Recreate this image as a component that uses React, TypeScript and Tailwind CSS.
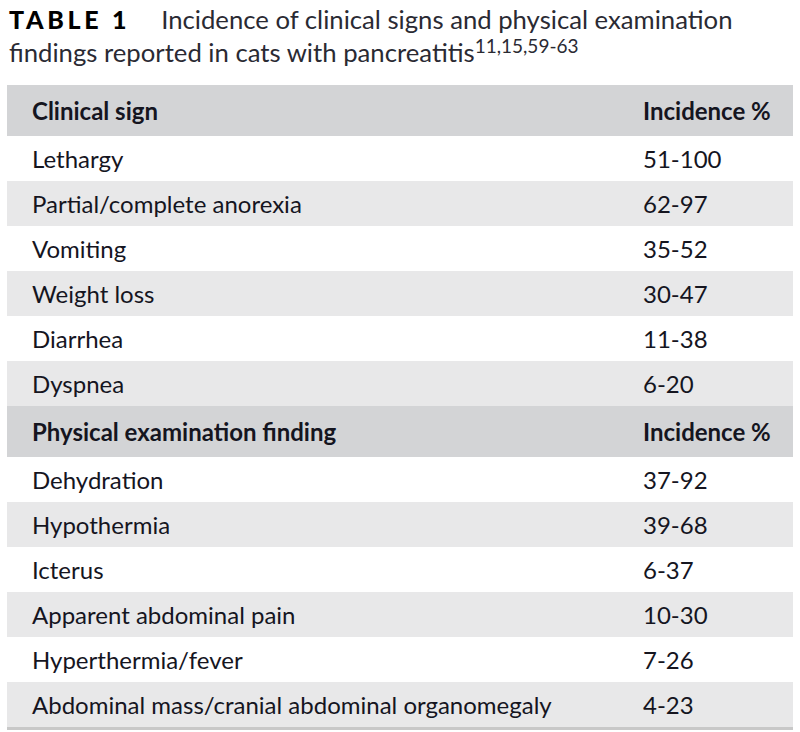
import React from "react";

const signs: [string, string][] = [
  ["Lethargy", "51-100"],
  ["Partial/complete anorexia", "62-97"],
  ["Vomiting", "35-52"],
  ["Weight loss", "30-47"],
  ["Diarrhea", "11-38"],
  ["Dyspnea", "6-20"],
];

const findings: [string, string][] = [
  ["Dehydration", "37-92"],
  ["Hypothermia", "39-68"],
  ["Icterus", "6-37"],
  ["Apparent abdominal pain", "10-30"],
  ["Hyperthermia/fever", "7-26"],
  ["Abdominal mass/cranial abdominal organomegaly", "4-23"],
];

function Header({ label }: { label: string }) {
  return (
    <div className="flex h-[51px] items-center bg-[#d3d4d6] font-bold">
      <div className="pl-[25px] flex-1">{label}</div>
      <div className="w-[150px]">Incidence %</div>
    </div>
  );
}

function Row({ label, value, i }: { label: string; value: string; i: number }) {
  return (
    <div className={`flex h-[45px] items-center ${i % 2 === 1 ? "bg-[#e8e8e9]" : "bg-white"}`}>
      <div className="pl-[25px] flex-1">{label}</div>
      <div className="w-[150px]">{value}</div>
    </div>
  );
}

export default function App() {
  return (
    <div className="w-[800px] h-[732px] bg-white text-[#15151f]" style={{ fontFamily: "Lato, 'Open Sans', sans-serif" }}>
      <div className="pl-[9px] pt-[3px] text-[25.7px] leading-[33px] text-[#2a2a33] whitespace-nowrap">
        <span className="font-black text-[25px] tracking-[3.7px] text-black">TABLE 1</span>
        <span className="ml-[31px]">Incidence of clinical signs and physical examination</span>
        <br />
        <span>findings reported in cats with pancreatitis</span>
        <sup className="text-[19px]">11,15,59-63</sup>
      </div>
      <div className="mx-[7px] mt-[16px] text-[24px] border-b-[3px] border-[#c8c8c8]">
        <Header label="Clinical sign" />
        {signs.map(([l, v], i) => (
          <Row key={l} label={l} value={v} i={i} />
        ))}
        <Header label="Physical examination finding" />
        {findings.map(([l, v], i) => (
          <Row key={l} label={l} value={v} i={i} />
        ))}
      </div>
    </div>
  );
}
